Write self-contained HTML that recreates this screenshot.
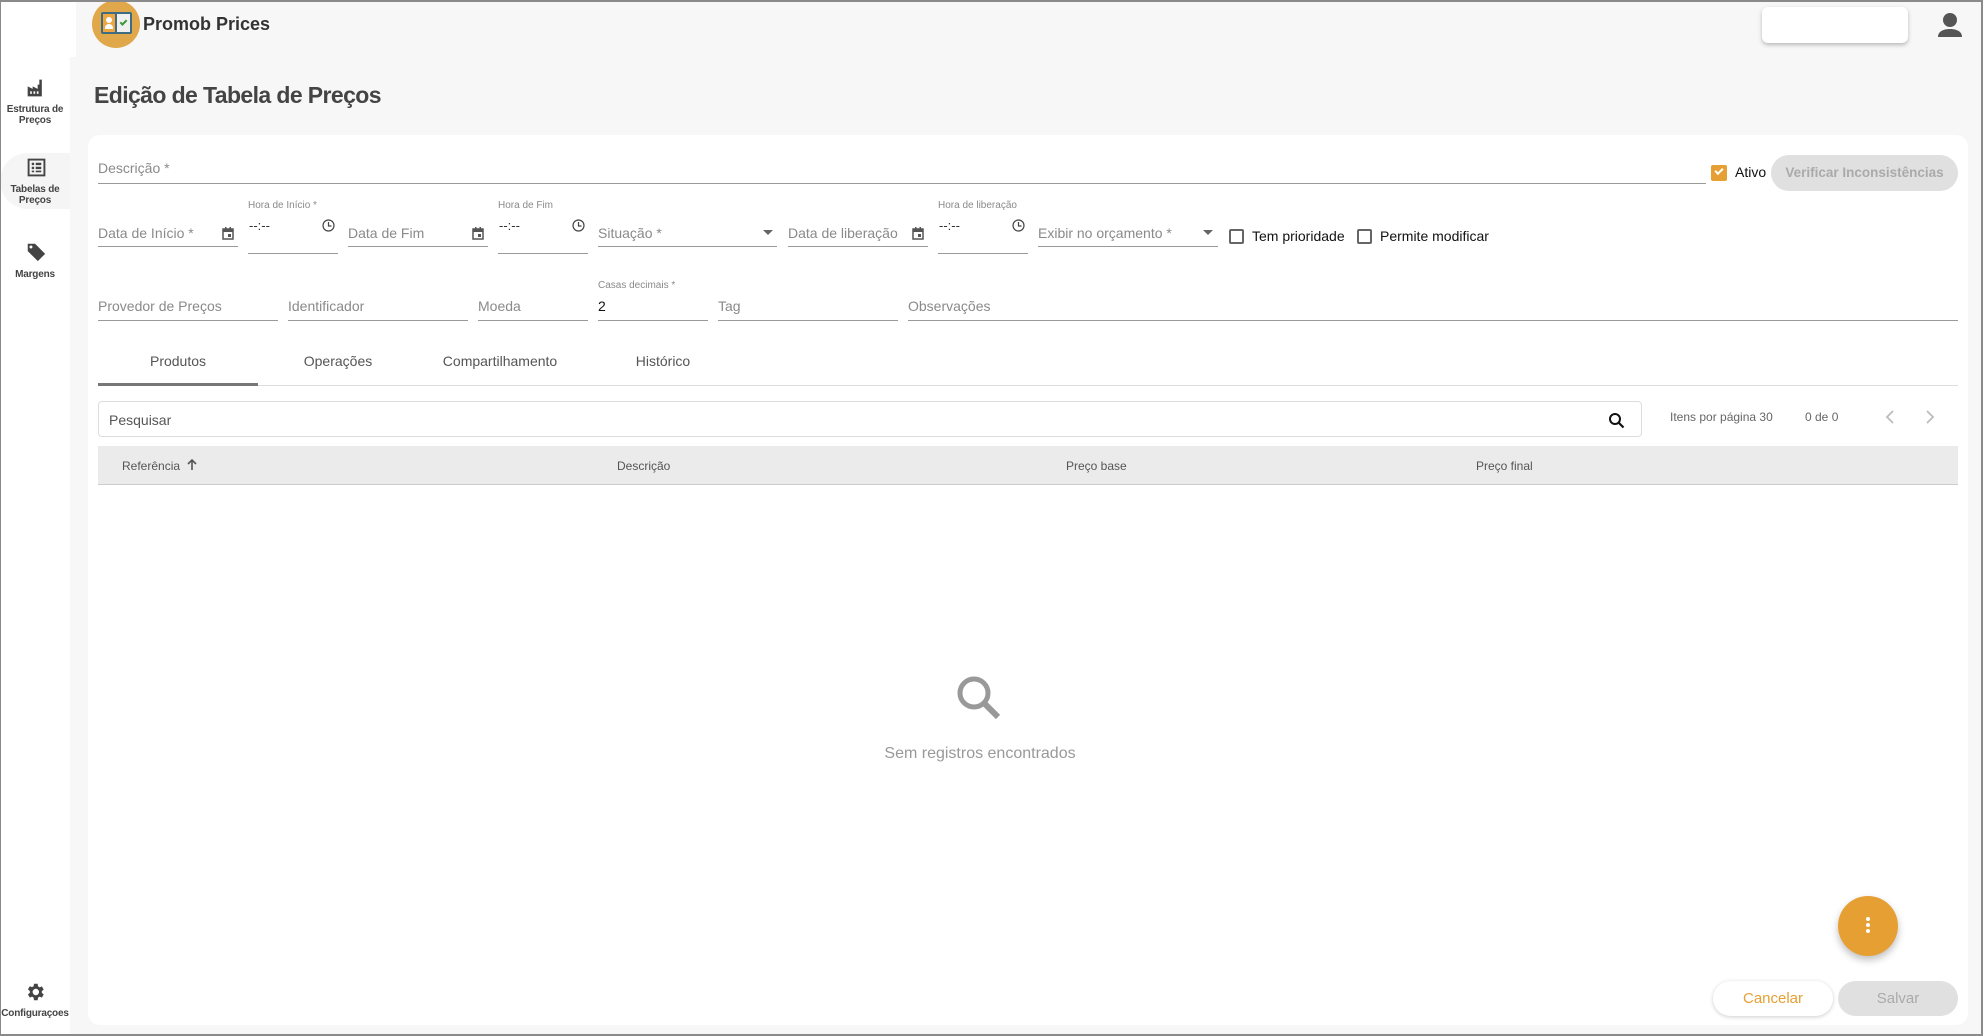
<!DOCTYPE html>
<html><head><meta charset="utf-8"><style>
*{box-sizing:border-box;margin:0;padding:0}
body{width:1983px;height:1036px;overflow:hidden;background:#f7f7f7;font-family:"Liberation Sans",sans-serif;position:relative;color:#555}
.a{position:absolute}
.frame{left:0;top:0;width:1983px;height:1036px;border:2px solid #8a8a8a;border-left-width:1px;z-index:50;pointer-events:none}
.side{left:0;top:0;width:70px;height:1036px;background:#fff}
.stxt{width:70px;text-align:center;font-size:10px;font-weight:bold;color:#444;line-height:11px;letter-spacing:-0.2px}
.lbl{font-size:14px;color:#8a8a8a;white-space:nowrap}
.ul{height:1px;background:#9a9a9a}
.sm{font-size:10px;color:#8a8a8a;white-space:nowrap}
.tab{font-size:14px;color:#555;transform:translateX(-50%);white-space:nowrap}
.th{font-size:12px;color:#555;top:459px}
.cb{width:15px;height:15px;border:2px solid #666;border-radius:2px;background:#fff}
</style></head><body>
<div class="a side"></div>
<div class="a" style="left:0;top:0;width:76px;height:57px;background:#fff"></div>
<div class="a" style="left:0;top:153px;width:70px;height:56px;background:#f5f5f5;border-radius:28px 0 0 28px"></div>
<svg class="a" style="left:26px;top:78px" width="20" height="20" viewBox="0 0 24 24"><path fill="#444" d="M2 22V10l6 3V10l6 3V8h2V2h3v20z"/><rect x="5" y="16" width="2" height="3" fill="#fff"/><rect x="9" y="16" width="2" height="3" fill="#fff"/><rect x="13" y="16" width="2" height="3" fill="#fff"/></svg>
<div class="a stxt" style="top:104px">Estrutura de<br>Preços</div>
<svg class="a" style="left:27px;top:158px" width="19" height="19" viewBox="0 0 24 24"><rect x="2" y="2" width="20" height="20" fill="none" stroke="#444" stroke-width="2.4"/><path fill="#444" d="M6 6h3v3H6zM11 6h7v3h-7zM6 11h3v3H6zM11 11h7v3h-7zM6 16h3v2H6zM11 16h7v2h-7z"/></svg>
<div class="a stxt" style="top:184px">Tabelas de<br>Preços</div>
<svg class="a" style="left:25px;top:241px" width="22" height="22" viewBox="0 0 24 24"><path fill="#444" d="M2 3h9l11 11-8 8L3 11V3z"/><circle cx="6.5" cy="6.5" r="1.6" fill="#fff"/></svg>
<div class="a stxt" style="top:269px">Margens</div>
<svg class="a" style="left:24px;top:981px" width="22" height="22" viewBox="0 0 24 24"><path fill="#444" d="M19.4 13a7.5 7.5 0 000-2l2.1-1.6-2-3.5-2.5 1a7.6 7.6 0 00-1.7-1L14.9 3h-4l-.4 2.7a7.6 7.6 0 00-1.7 1l-2.5-1-2 3.5L6.4 11a7.5 7.5 0 000 2l-2.1 1.6 2 3.5 2.5-1a7.6 7.6 0 001.7 1l.4 2.9h4l.4-2.9a7.6 7.6 0 001.7-1l2.5 1 2-3.5zM12.9 15.5a3.5 3.5 0 110-7 3.5 3.5 0 010 7z"/></svg>
<div class="a stxt" style="top:1008px">Configuraçoes</div>
<div class="a" style="left:92px;top:0;width:48px;height:48px;border-radius:50%;background:#e0a84a;overflow:hidden">
 <div class="a" style="left:9px;top:12px;width:31px;height:22px;background:#3d6d82;border-radius:2px"></div>
 <div class="a" style="left:11px;top:14px;width:12px;height:18px;background:#f0a640"></div>
 <div class="a" style="left:14px;top:17px;width:6px;height:6px;border-radius:50%;background:#fff"></div>
 <div class="a" style="left:13px;top:24px;width:8px;height:5px;border-radius:4px 4px 0 0;background:#fff"></div>
 <div class="a" style="left:25px;top:14px;width:13px;height:18px;background:#f0f0f0"></div>
 <div class="a" style="left:28px;top:20px;width:7px;height:4px;border-left:2px solid #3a9a3a;border-bottom:2px solid #3a9a3a;transform:rotate(-45deg)"></div>
</div>
<div class="a" style="left:143px;top:14px;font-size:18px;font-weight:bold;color:#333">Promob Prices</div>
<div class="a" style="left:1762px;top:7px;width:146px;height:36px;background:#fff;border-radius:6px;box-shadow:0 2px 4px rgba(0,0,0,.25)"></div>
<svg class="a" style="left:1936px;top:12px" width="28" height="26" viewBox="0 0 28 26"><circle cx="14" cy="8" r="7" fill="#555"/><path fill="#555" d="M2 25c0-6 6-8 12-8s12 2 12 8z"/></svg>
<div class="a" style="left:94px;top:82px;font-size:23px;font-weight:bold;color:#444;letter-spacing:-0.6px">Edição de Tabela de Preços</div>
<div class="a" style="left:88px;top:135px;width:1880px;height:890px;background:#fff;border-radius:12px"></div>
<div class="a lbl" style="left:98px;top:160px">Descrição *</div>
<div class="a ul" style="left:98px;top:183px;width:1608px"></div>
<div class="a" style="left:1711px;top:165px;width:16px;height:16px;background:#e69f33;border-radius:2px"></div>
<div class="a" style="left:1715px;top:168px;width:8px;height:5px;border-left:2px solid #fff;border-bottom:2px solid #fff;transform:rotate(-45deg)"></div>
<div class="a" style="left:1735px;top:164px;font-size:14px;color:#111">Ativo</div>
<div class="a" style="left:1771px;top:155px;width:187px;height:36px;background:#e0e0e0;border-radius:18px;font-size:13.5px;font-weight:bold;color:#aaa;text-align:center;line-height:36px">Verificar Inconsistências</div>
<div class="a lbl" style="left:98px;top:225px">Data de Início *</div><div class="a ul" style="left:98px;top:246px;width:140px"></div>
<div class="a sm" style="left:248px;top:200px">Hora de Início *</div><div class="a" style="left:249px;top:218px;font-size:13px;color:#333">--:--</div><div class="a ul" style="left:248px;top:253px;width:90px"></div>
<div class="a lbl" style="left:348px;top:225px">Data de Fim</div><div class="a ul" style="left:348px;top:246px;width:140px"></div>
<div class="a sm" style="left:498px;top:200px">Hora de Fim</div><div class="a" style="left:499px;top:218px;font-size:13px;color:#333">--:--</div><div class="a ul" style="left:498px;top:253px;width:90px"></div>
<div class="a lbl" style="left:598px;top:225px">Situação *</div><div class="a ul" style="left:598px;top:246px;width:179px"></div>
<div class="a lbl" style="left:788px;top:225px">Data de liberação</div><div class="a ul" style="left:788px;top:246px;width:140px"></div>
<div class="a sm" style="left:938px;top:200px">Hora de liberação</div><div class="a" style="left:939px;top:218px;font-size:13px;color:#333">--:--</div><div class="a ul" style="left:938px;top:253px;width:90px"></div>
<div class="a lbl" style="left:1038px;top:225px">Exibir no orçamento *</div><div class="a ul" style="left:1038px;top:246px;width:180px"></div>
<svg class="a" style="left:222px;top:227px" width="12" height="13" viewBox="0 0 12 13"><rect x="1" y="2" width="10" height="10" fill="none" stroke="#555" stroke-width="1.5"/><rect x="1" y="2" width="10" height="3" fill="#555"/><rect x="3" y="0" width="1.5" height="3" fill="#555"/><rect x="7.5" y="0" width="1.5" height="3" fill="#555"/><rect x="6" y="7" width="3" height="3" fill="#555"/></svg>
<svg class="a" style="left:472px;top:227px" width="12" height="13" viewBox="0 0 12 13"><rect x="1" y="2" width="10" height="10" fill="none" stroke="#555" stroke-width="1.5"/><rect x="1" y="2" width="10" height="3" fill="#555"/><rect x="3" y="0" width="1.5" height="3" fill="#555"/><rect x="7.5" y="0" width="1.5" height="3" fill="#555"/><rect x="6" y="7" width="3" height="3" fill="#555"/></svg>
<svg class="a" style="left:912px;top:227px" width="12" height="13" viewBox="0 0 12 13"><rect x="1" y="2" width="10" height="10" fill="none" stroke="#555" stroke-width="1.5"/><rect x="1" y="2" width="10" height="3" fill="#555"/><rect x="3" y="0" width="1.5" height="3" fill="#555"/><rect x="7.5" y="0" width="1.5" height="3" fill="#555"/><rect x="6" y="7" width="3" height="3" fill="#555"/></svg>
<svg class="a" style="left:322px;top:219px" width="13" height="13" viewBox="0 0 13 13"><circle cx="6.5" cy="6.5" r="5.5" fill="none" stroke="#444" stroke-width="1.2"/><path d="M6.5 3v4h3" fill="none" stroke="#444" stroke-width="1.2"/></svg>
<svg class="a" style="left:572px;top:219px" width="13" height="13" viewBox="0 0 13 13"><circle cx="6.5" cy="6.5" r="5.5" fill="none" stroke="#444" stroke-width="1.2"/><path d="M6.5 3v4h3" fill="none" stroke="#444" stroke-width="1.2"/></svg>
<svg class="a" style="left:1012px;top:219px" width="13" height="13" viewBox="0 0 13 13"><circle cx="6.5" cy="6.5" r="5.5" fill="none" stroke="#444" stroke-width="1.2"/><path d="M6.5 3v4h3" fill="none" stroke="#444" stroke-width="1.2"/></svg>
<svg class="a" style="left:763px;top:230px" width="10" height="5"><path d="M0 0h10L5 5z" fill="#666"/></svg>
<svg class="a" style="left:1203px;top:230px" width="10" height="5"><path d="M0 0h10L5 5z" fill="#666"/></svg>
<div class="a cb" style="left:1229px;top:229px"></div><div class="a" style="left:1252px;top:228px;font-size:14px;color:#111">Tem prioridade</div>
<div class="a cb" style="left:1357px;top:229px"></div><div class="a" style="left:1380px;top:228px;font-size:14px;color:#111">Permite modificar</div>
<div class="a lbl" style="left:98px;top:298px">Provedor de Preços</div><div class="a ul" style="left:98px;top:320px;width:180px"></div>
<div class="a lbl" style="left:288px;top:298px">Identificador</div><div class="a ul" style="left:288px;top:320px;width:180px"></div>
<div class="a lbl" style="left:478px;top:298px">Moeda</div><div class="a ul" style="left:478px;top:320px;width:110px"></div>
<div class="a sm" style="left:598px;top:280px">Casas decimais *</div><div class="a" style="left:598px;top:298px;font-size:14px;color:#111">2</div><div class="a ul" style="left:598px;top:320px;width:110px"></div>
<div class="a lbl" style="left:718px;top:298px">Tag</div><div class="a ul" style="left:718px;top:320px;width:180px"></div>
<div class="a lbl" style="left:908px;top:298px">Observações</div><div class="a ul" style="left:908px;top:320px;width:1050px"></div>
<div class="a tab" style="left:178px;top:353px">Produtos</div>
<div class="a tab" style="left:338px;top:353px">Operações</div>
<div class="a tab" style="left:500px;top:353px">Compartilhamento</div>
<div class="a tab" style="left:663px;top:353px">Histórico</div>
<div class="a" style="left:98px;top:385px;width:1860px;height:1px;background:#ddd"></div>
<div class="a" style="left:98px;top:383px;width:160px;height:3px;background:#777"></div>
<div class="a" style="left:98px;top:401px;width:1544px;height:36px;border:1px solid #ddd;border-radius:4px"></div>
<div class="a" style="left:109px;top:412px;font-size:14px;color:#555">Pesquisar</div>
<svg class="a" style="left:1608px;top:412px" width="17" height="17" viewBox="0 0 17 17"><circle cx="7" cy="7" r="5" fill="none" stroke="#111" stroke-width="2"/><path d="M10.5 10.5L15.5 15.5" stroke="#111" stroke-width="2.2"/></svg>
<div class="a" style="left:1670px;top:410px;font-size:12px;color:#666">Itens por página 30</div>
<div class="a" style="left:1805px;top:410px;font-size:12px;color:#666">0 de 0</div>
<svg class="a" style="left:1884px;top:409px" width="12" height="16"><path d="M9 2L3 8l6 6" fill="none" stroke="#bbb" stroke-width="1.8"/></svg>
<svg class="a" style="left:1924px;top:409px" width="12" height="16"><path d="M3 2l6 6-6 6" fill="none" stroke="#bbb" stroke-width="1.8"/></svg>
<div class="a" style="left:98px;top:446px;width:1860px;height:39px;background:#ebebeb;border-bottom:1px solid #ccc"></div>
<div class="a th" style="left:122px">Referência</div>
<svg class="a" style="left:186px;top:458px" width="12" height="13"><path d="M6 12V2M2 6l4-4 4 4" fill="none" stroke="#555" stroke-width="1.6"/></svg>
<div class="a th" style="left:617px">Descrição</div>
<div class="a th" style="left:1066px">Preço base</div>
<div class="a th" style="left:1476px">Preço final</div>
<svg class="a" style="left:954px;top:673px" width="50" height="50" viewBox="0 0 50 50"><circle cx="20" cy="20" r="14" fill="none" stroke="#999" stroke-width="5"/><path d="M30 30l14 14" stroke="#999" stroke-width="6"/></svg>
<div class="a" style="left:780px;top:745px;width:400px;text-align:center;font-size:16px;color:#999">Sem registros encontrados</div>
<div class="a" style="left:1838px;top:896px;width:60px;height:60px;border-radius:50%;background:#e69f33;box-shadow:0 4px 8px rgba(0,0,0,.25)"></div>
<div class="a" style="left:1866px;top:917px;width:4px;height:4px;border-radius:50%;background:#fff;box-shadow:0 6px 0 #fff,0 12px 0 #fff"></div>
<div class="a" style="left:1713px;top:981px;width:120px;height:35px;border-radius:18px;background:#fff;box-shadow:0 1px 4px rgba(0,0,0,.2);text-align:center;line-height:35px;font-size:15px;color:#e69f33">Cancelar</div>
<div class="a" style="left:1838px;top:981px;width:120px;height:35px;border-radius:18px;background:#e0e0e0;text-align:center;line-height:35px;font-size:15px;color:#aaa">Salvar</div>
<div class="a frame"></div>
</body></html>
